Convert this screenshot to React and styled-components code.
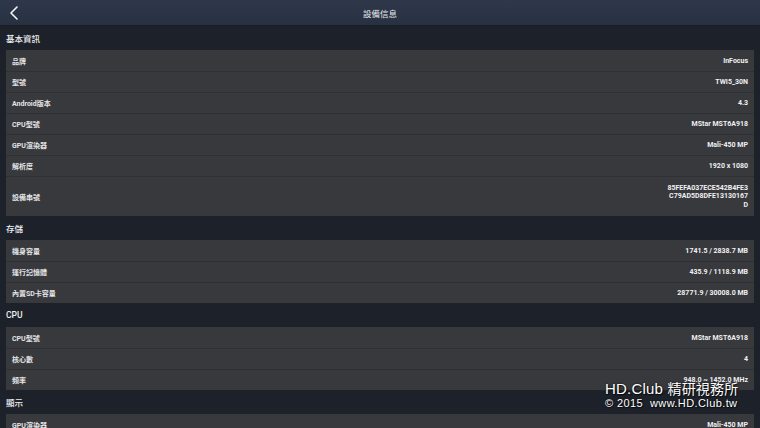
import React from "react";
import styled, { createGlobalStyle } from "styled-components";

const Global = createGlobalStyle`
  html, body { margin: 0; padding: 0; background: #1d2129; overflow: hidden; }
  body { font-family: Roboto, "Noto Sans CJK TC", sans-serif; -webkit-font-smoothing: antialiased; }
`;

const Page = styled.div`
  position: relative;
  width: 760px;
  height: 428px;
  overflow: hidden;
  background: #1d2129;
`;

const Header = styled.div`
  height: 25px;
  display: flex;
  align-items: center;
  justify-content: center;
  position: relative;
  background: linear-gradient(#2f384a, #283142);
  border-bottom: 1px solid #1a1e26;
`;

const BackButton = styled.div`
  position: absolute;
  left: 8px;
  top: 5px;
  width: 12px;
  height: 16px;
  display: flex;
`;

const Title = styled.div`
  color: #e8eaee;
  font-size: 8.5px;
  font-family: "Noto Sans CJK TC", sans-serif;
`;

const Content = styled.div`
  padding: 0 6px;
`;

const SectionTitle = styled.div`
  height: 24px;
  display: flex;
  align-items: center;
  color: #eceef2;
  font-size: 8.5px;
  font-weight: 500;
  font-family: Roboto, "Noto Sans CJK TC", sans-serif;
`;

const Card = styled.div`
  background: #38393d;
  display: flex;
  flex-direction: column;
`;

const Row = styled.div`
  height: ${(p) => (p.$tall ? 40 : 21)}px;
  flex-shrink: 0;
  display: flex;
  align-items: center;
  justify-content: space-between;
  padding: 0 6px;
  box-sizing: border-box;
  border-top: 1px solid ${(p) => (p.$first ? "transparent" : "#2f3034")};
`;

const Label = styled.div`
  color: #e4e4e6;
  font-size: 7px;
  font-weight: 700;
`;

const Value = styled.div`
  color: #f0f0f2;
  font-size: 7px;
  font-weight: 700;
  text-align: right;
  line-height: 8.5px;
  white-space: pre-line;
`;

const Watermark = styled.div`
  position: absolute;
  left: 605px;
  top: 380px;
  color: #ffffff;
  font-family: "Liberation Sans", "Noto Sans CJK TC", sans-serif;
  text-shadow: 0 0 2px rgba(0,0,0,0.8), 1px 1px 1px rgba(0,0,0,0.6);
  pointer-events: none;
  white-space: nowrap;
`;

const WmLine1 = styled.div`
  font-size: 15px;
  line-height: 17px;
  letter-spacing: 0.2px;
  & span { font-family: "Noto Sans CJK TC", sans-serif; font-size: 14px; }
`;

const WmLine2 = styled.div`
  font-size: 11px;
  line-height: 13px;
  letter-spacing: 0.4px;
  white-space: pre;
`;

const sections = [
  {
    title: "基本資訊",
    rows: [
      ["品牌", "InFocus"],
      ["型號", "TWI5_30N"],
      ["Android版本", "4.3"],
      ["CPU型號", "MStar MST6A918"],
      ["GPU渲染器", "Mali-450 MP"],
      ["解析度", "1920 x 1080"],
      ["設備串號", "85FEFA037ECE542B4FE3\nC79AD5D8DFE13130167\nD", true],
    ],
  },
  {
    title: "存儲",
    rows: [
      ["機身容量", "1741.5 / 2838.7 MB"],
      ["運行記憶體", "435.9 / 1118.9 MB"],
      ["內置SD卡容量", "28771.9 / 30008.0 MB"],
    ],
  },
  {
    title: "CPU",
    rows: [
      ["CPU型號", "MStar MST6A918"],
      ["核心數", "4"],
      ["頻率", "948.0 ~ 1452.0 MHz"],
    ],
  },
  {
    title: "顯示",
    rows: [
      ["GPU渲染器", "Mali-450 MP"],
      ["解析度", "1920 x 1080"],
    ],
  },
];

export default function App() {
  return (
    <Page>
      <Global />
      <Header>
        <BackButton>
          <svg width="12" height="16" viewBox="0 0 12 16">
            <path d="M9 2 L3 8 L9 14" fill="none" stroke="#f2f4f8" strokeWidth="1.6" strokeLinecap="round" strokeLinejoin="round" />
          </svg>
        </BackButton>
        <Title>設備信息</Title>
      </Header>
      <Content>
        {sections.map((s) => (
          <div key={s.title}>
            <SectionTitle>{s.title}</SectionTitle>
            <Card>
              {s.rows.map(([l, v, tall], i) => (
                <Row key={l} $first={i === 0} $tall={tall}>
                  <Label>{l}</Label>
                  <Value>{v}</Value>
                </Row>
              ))}
            </Card>
          </div>
        ))}
      </Content>
      <Watermark>
        <WmLine1>HD.Club <span>精研視務所</span></WmLine1>
        <WmLine2>{"© 2015  www.HD.Club.tw"}</WmLine2>
      </Watermark>
    </Page>
  );
}
